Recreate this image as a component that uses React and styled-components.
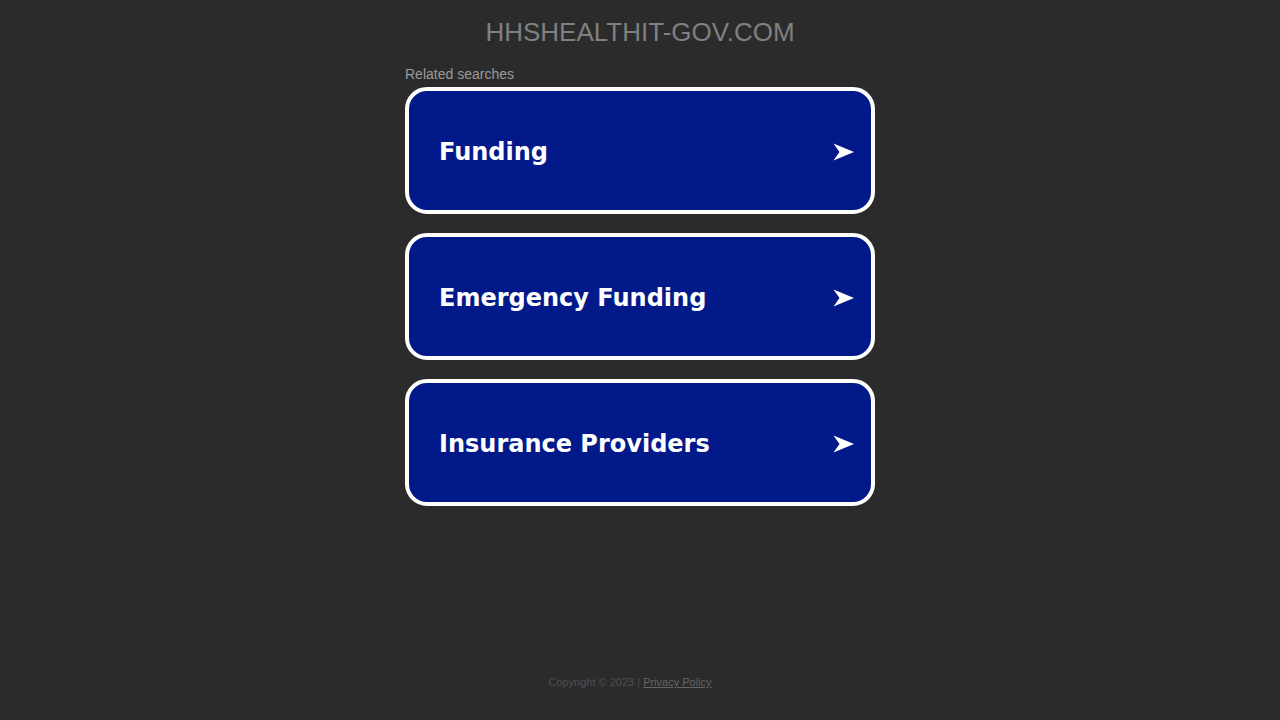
import styled, { createGlobalStyle } from "styled-components";

const searches = ["Funding", "Emergency Funding", "Insurance Providers"];

const GlobalStyle = createGlobalStyle`
    html, body {
        margin: 0;
        padding: 0;
        background: #2b2b2b;
        font-family: "Liberation Sans", Arial, sans-serif;
    }
`;

const Arrow = () => (
    <svg width="22" height="18" viewBox="0 0 22 18">
        <path d="M0.5 0.5 L21 9 L0.5 17.5 L6.5 9 Z" fill="#ffffff" />
    </svg>
);

const App = () => {
    return (
        <>
            <GlobalStyle />
            <Page>
                <Domain>HHSHEALTHIT-GOV.COM</Domain>
                <Content>
                    <Label>Related searches</Label>
                    <List>
                        {searches.map(item => (
                            <Card key={item} href="#">
                                <CardText>{item}</CardText>
                                <Arrow />
                            </Card>
                        ))}
                    </List>
                </Content>
                <Footer>
                    Copyright © 2023 | <FooterLink href="#">Privacy Policy</FooterLink>
                </Footer>
            </Page>
        </>
    );
};

const Page = styled.div`
    display: flex;
    flex-direction: column;
    align-items: center;
    min-height: 720px;
    box-sizing: border-box;
`;

const Domain = styled.h1`
    margin: 17px 0 0;
    font-family: "Liberation Sans", Arial, sans-serif;
    font-weight: normal;
    font-size: 26px;
    line-height: 30px;
    color: #808080;
`;

const Content = styled.div`
    width: 470px;
    margin-top: 19px;
    display: flex;
    flex-direction: column;
`;

const Label = styled.div`
    font-size: 14px;
    line-height: 16px;
    color: #9a9a9a;
    margin-bottom: 5px;
`;

const List = styled.div`
    display: flex;
    flex-direction: column;
    gap: 19px;
`;

const Card = styled.a`
    display: flex;
    align-items: center;
    justify-content: space-between;
    box-sizing: border-box;
    height: 127px;
    padding: 3px 16px 0 30px;
    background: #021a89;
    border: 4px solid #ffffff;
    border-radius: 22px;
    text-decoration: none;
`;

const CardText = styled.span`
    font-family: "DejaVu Sans", Verdana, sans-serif;
    font-weight: bold;
    font-size: 24px;
    color: #ffffff;
`;

const Footer = styled.div`
    margin-top: auto;
    margin-bottom: 32px;
    margin-right: 20px;
    font-size: 11px;
    color: #4f4f4f;
`;

const FooterLink = styled.a`
    color: #666666;
    text-decoration: underline;
`;

export default App;
